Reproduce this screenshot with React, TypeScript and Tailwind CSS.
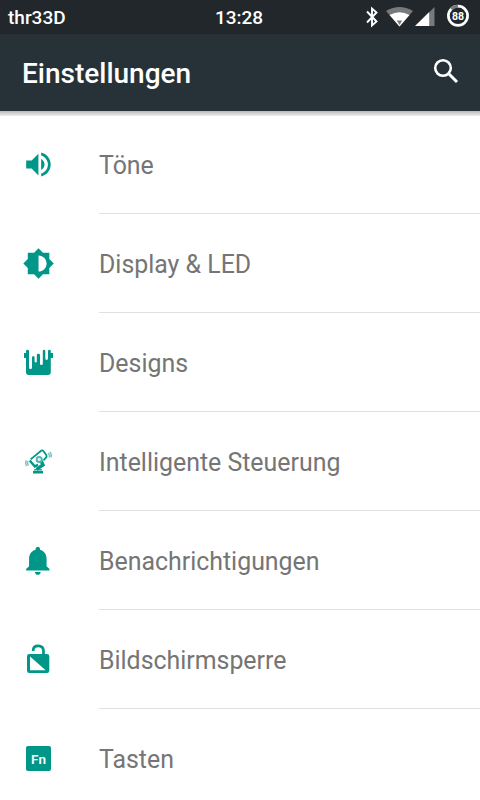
import type { ReactNode } from "react";

const VolumeIcon = () => (
    <g transform="translate(2.1 2.2) scale(1.36)">
        <path d="M3 9v6h4l5 5V4L7 9H3zm13.5 3c0-1.77-1.02-3.29-2.5-4.03v8.05c1.48-.73 2.5-2.25 2.5-4.02zM14 3.23v2.06c2.89.86 5 3.54 5 6.71s-2.11 5.85-5 6.71v2.06c4.01-.91 7-4.49 7-8.77s-2.99-7.86-7-8.77z" />
    </g>
);

const BrightnessIcon = () => (
    <g transform="translate(2.4 2.4) scale(1.345)">
        <path d="M20 15.31L23.31 12 20 8.69V4h-4.69L12 .69 8.69 4H4v4.69L.69 12 4 15.31V20h4.69L12 23.31 15.31 20H20v-4.69zM12 18V6c3.31 0 6 2.69 6 6s-2.69 6-6 6z" />
    </g>
);

const PaintIcon = () => (
    <path d="M6 7.2Q6 5.8 7.5 5.8T9 7.2V23.5Q9 25 10.5 25T12 23.5V13.5Q12 12 13.3 12T14.6 13.5V17.3Q14.6 18.6 15.7 18.6T16.8 17.3V11.2Q16.8 9.8 18.4 9.8T20 11.2V19.8Q20 21 21.4 21T22.8 19.8V7.2Q22.8 5.8 24 5.8T25.3 7.2V14.6Q25.3 16 26.6 16T28 14.6V7.2Q28 5.8 29.4 5.8T30.8 7.2V9H33V14H30.8V28Q30.8 31 27.8 31H9Q6 31 6 28V14H4V9H6Z" />
);

const RobotIcon = () => (
    <g fill="none" stroke="#009688">
        <path d="M13 29.2h10" strokeWidth="2.6" />
        <path d="M14 26.8h8" strokeWidth="1.2" />
        <path d="M10.6 16.4L21.4 7.6Q22.6 7 23.4 8L26.4 12.2Q27 13.4 26.2 14.3L23.4 17.4" strokeWidth="1.8" />
        <path d="M9.8 17.4L14.8 23.4L18 21.8" strokeWidth="2.4" />
        <path d="M21 17.8L23 22L16.5 26.4" strokeWidth="3.4" />
        <circle cx="19.2" cy="16.4" r="2.6" fill="#d5eeeb" stroke="#4db6ac" strokeWidth="1.8" />
        <path d="M8 18q-1.2 2 .4 4.6M6.2 17.4q-1.4 2.9.4 5.8M28 10q2 2 1.4 4.6M29.8 9.2q2.2 2 1.2 5" strokeOpacity=".5" strokeWidth="1.6" />
    </g>
);

const BellIcon = () => (
    <g transform="translate(.3 1.1) scale(1.46 1.44)">
        <path d="M12 22c1.1 0 2-.9 2-2h-4c0 1.1.89 2 2 2zm6-6v-5c0-3.07-1.64-5.64-4.5-6.32V4c0-.83-.67-1.5-1.5-1.5s-1.5.67-1.5 1.5v.68C7.63 5.36 6 7.92 6 11v5l-2 2v1h16v-1l-2-2z" />
    </g>
);

const LockIcon = () => (
    <>
        <path d="M13.2 10V9.4Q13.2 4.8 18.2 4.8T23.5 9.6V14" fill="none" stroke="#009688" strokeWidth="2.7" />
        <path fillRule="evenodd" d="M9.3 12.9H27Q29.3 12.9 29.3 15.2V29.7Q29.3 32 27 32H9.3Q7 32 7 29.7V15.2Q7 12.9 9.3 12.9ZM10 15.6V29.3H25.7Z" />
    </>
);

const FnIcon = () => (
    <>
        <rect x="6" y="6" width="25" height="25" rx="2" />
        <text x="18.6" y="24" fill="#fff" fontSize="13.5" fontWeight="600" textAnchor="middle">Fn</text>
    </>
);

const items: { label: string; icon: ReactNode }[] = [
    { label: "Töne", icon: <VolumeIcon /> },
    { label: "Display & LED", icon: <BrightnessIcon /> },
    { label: "Designs", icon: <PaintIcon /> },
    { label: "Intelligente Steuerung", icon: <RobotIcon /> },
    { label: "Benachrichtigungen", icon: <BellIcon /> },
    { label: "Bildschirmsperre", icon: <LockIcon /> },
    { label: "Tasten", icon: <FnIcon /> },
];

const StatusBar = () => {
    return (
        <div className="grid h-[34px] grid-cols-[1fr_auto_1fr] items-center bg-[#21272b] pl-2 pr-2.5 text-[19px] font-medium leading-[32px] text-white">
            <span className="pt-0.5">thr33D</span>
            <span className="pt-0.5">13:28</span>
            <div className="flex items-center justify-end">
                <svg width="14" height="34" viewBox="0 0 14 34" className="mr-[7px]" fill="none" stroke="#fff" strokeWidth="1.9">
                    <path d="M2 11.5L11.5 21.5L7 25.5V8.5L11.5 12.5L2 22.5" />
                </svg>
                <svg width="27" height="34" viewBox="0 0 27 34" className="mr-[2px]">
                    <path d="M0 11Q13.5 3 27 11L13.5 26.5Z" fill="#777a7c" />
                    <path d="M3.5 15Q13.5 9.6 23.5 15L13.5 26.5Z" fill="#fff" />
                    <path d="M10.8 20.5H16.2L13.5 25Z" fill="#777a7c" />
                </svg>
                <svg width="20" height="34" viewBox="0 0 20 34" className="mr-[11px]">
                    <path d="M14 12.5L19.5 7V26H14Z" fill="#777a7c" />
                    <path d="M0 26L14.2 12V26Z" fill="#fff" />
                </svg>
                <svg width="24" height="34" viewBox="0 0 24 34">
                    <circle cx="12" cy="15.8" r="9.6" fill="none" stroke="#fff" strokeWidth="2.7" />
                    <path d="M5.2 9A9.6 9.6 0 0 1 12 6.2" fill="none" stroke="#777a7c" strokeWidth="2.9" />
                    <text x="12" y="19.6" fill="#fff" fontSize="10.5" fontWeight="700" textAnchor="middle">88</text>
                </svg>
            </div>
        </div>
    );
};

const App = () => {
    return (
        <div className="h-[800px] w-[480px] overflow-hidden bg-white font-['Roboto',sans-serif]">
            <StatusBar />
            <header className="flex h-[77px] items-center justify-between bg-[#263238] pl-[22px] pr-5">
                <h1 className="pt-0.5 text-[28px] font-medium leading-[75px] text-white">Einstellungen</h1>
                <svg width="28" height="28" viewBox="0 0 28 28" fill="none" stroke="#fff" strokeWidth="2.6" className="mb-[3px]">
                    <circle cx="11" cy="11" r="7.8" />
                    <path d="M16.5 16.5L25 25" strokeWidth="3" />
                </svg>
            </header>
            <div className="h-[5px] bg-linear-to-b from-[#b9b9b9] to-[#efefef]" />
            <ul className="-mt-px">
                {items.map((item) => (
                    <li key={item.label} className="flex h-[99px] items-center pl-5">
                        <svg width="36" height="36" viewBox="0 0 36 36" fill="#009688" className="mb-px mr-[43px]">
                            {item.icon}
                        </svg>
                        <div className="flex h-full flex-1 items-center border-b border-[#e0e0e0] pt-[3px] text-[24.9px] text-[#757575]">
                            {item.label}
                        </div>
                    </li>
                ))}
            </ul>
        </div>
    );
};

export default App;
